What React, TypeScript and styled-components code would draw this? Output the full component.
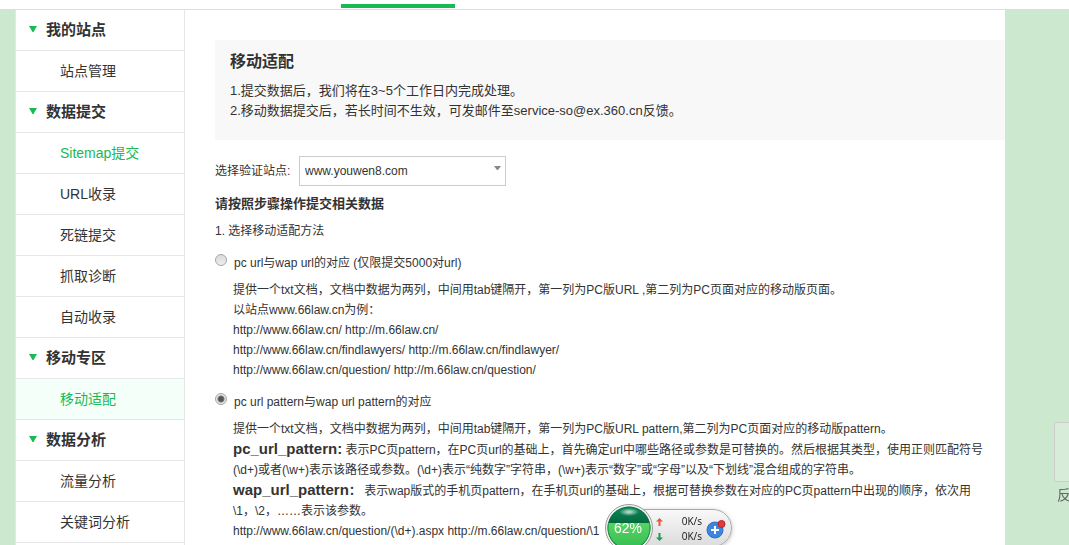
import React from 'react';
import styled, { createGlobalStyle } from 'styled-components';

const GlobalStyle = createGlobalStyle`
  * { box-sizing: border-box; }
  body {
    margin: 0;
    background: #cce8cf;
    color: #333;
    font: 12px/20px "Liberation Sans", "Noto Sans CJK SC", sans-serif;
  }
  h1, h2, p, ul, ol { margin: 0; padding: 0; }
  ul, ol { list-style: none; }
`;

const Page = styled.div`
  height: 100vh;
  overflow: hidden;
  display: flex;
  flex-direction: column;
`;

const TopBar = styled.header`
  flex: none;
  height: 10px;
  padding: 4px 0 0 341px;
  background: #fff;
  border-bottom: 1px solid #ddd;
`;

const ActiveTab = styled.div`
  width: 114px;
  height: 4px;
  background: #19b955;
`;

const Body = styled.div`
  flex: 1;
  min-height: 0;
  display: flex;
  margin: 0 64px 0 15px;
  background: #fff;
`;

const Sidebar = styled.nav`
  flex: none;
  width: 170px;
  border: solid #e6e6e6;
  border-width: 0 1px;
`;

const rowHeight = 41;

const Group = styled.h2`
  display: flex;
  align-items: center;
  gap: 8px;
  height: ${rowHeight}px;
  padding-left: 12px;
  border-bottom: 1px solid #e6e6e6;
  font-size: 15px;
  font-weight: bold;
`;

const Triangle = styled.svg`
  width: 10px;
  height: 8px;
`;

const NavLink = styled.a<{ $green?: boolean; $current?: boolean }>`
  display: flex;
  align-items: center;
  height: ${rowHeight}px;
  padding-left: 44px;
  border-bottom: 1px solid #e6e6e6;
  background: ${(p) => (p.$current ? '#f5fffa' : '#fff')};
  color: ${(p) => (p.$green || p.$current ? '#19b955' : '#333')};
  font-size: 14px;
  text-decoration: none;
`;

const Main = styled.main`
  flex: 1;
  min-width: 0;
  padding: 30px 0 0 30px;
  overflow: hidden;
  white-space: nowrap;
`;

const Intro = styled.section`
  padding: 11px 15px 19px;
  background: #f8f8f8;
  font-size: 13px;
`;

const Title = styled.h1`
  margin-bottom: 8px;
  font-size: 16px;
  line-height: 22px;
`;

const SiteField = styled.div`
  display: flex;
  align-items: center;
  gap: 8px;
  margin: 16px 0 8px;
`;

const SiteLabel = styled.label`
  width: 76px;
`;

const SelectBox = styled.div`
  position: relative;
  width: 207px;
`;

const Select = styled.select`
  display: block;
  width: 100%;
  height: 30px;
  padding: 0 24px 0 5px;
  border: 1px solid #ccc;
  border-radius: 0;
  background: #fff;
  color: #333;
  font: inherit;
  appearance: none;
`;

const SelectArrow = styled.svg`
  position: absolute;
  top: 10px;
  right: 5px;
  pointer-events: none;
`;

const StepsTitle = styled.h2`
  font-size: 13px;
  line-height: 20px;
`;

const Step = styled.p`
  margin: 7px 0 12px;
`;

const Method = styled.section`
  margin-bottom: 12px;
`;

const MethodLabel = styled.label`
  display: flex;
  align-items: flex-start;
  gap: 7px;
  margin-bottom: 7px;
`;

const Radio = styled.input`
  appearance: none;
  flex: none;
  width: 12px;
  height: 12px;
  margin: 1px 0 0;
  border: 1px solid #a5a5a5;
  border-radius: 50%;
  background: linear-gradient(#dadada, #eee);
  &:checked {
    background: radial-gradient(circle, #555 0 2px, #777 3px, #e6e6e6 4px);
  }
`;

const Description = styled.div`
  padding-left: 18px;
`;

const Term = styled.strong`
  font-size: 15px;
`;

const Feedback = styled.aside`
  position: fixed;
  top: 422px;
  right: -45px;
  width: 60px;
  color: #666;
  font-size: 14px;
`;

const FeedbackTile = styled.div`
  height: 60px;
  margin-bottom: 3px;
  border: 1px solid #ccc;
  border-radius: 3px;
  background: #d7ecd9;
`;

const FeedbackLink = styled.a`
  display: block;
  padding-left: 3px;
  color: inherit;
  text-decoration: none;
  white-space: nowrap;
`;

const Monitor = styled.aside`
  position: fixed;
  left: 605px;
  bottom: -7px;
  display: flex;
  align-items: center;
`;

const Pill = styled.div`
  display: flex;
  align-items: center;
  width: 103px;
  height: 38px;
  margin-left: -24px;
  padding: 2px 5px 0 26px;
  border: 1px solid #aaa;
  border-radius: 0 19px 19px 0;
  background: linear-gradient(#f8f8f8, #dcdcdc);
  box-shadow: 0 1px 4px rgba(0, 0, 0, 0.25);
`;

const Ball = styled.svg`
  position: relative;
  z-index: 1;
  flex: none;
`;

const Rates = styled.ul`
  flex: 1;
`;

const Rate = styled.li`
  display: flex;
  align-items: center;
  justify-content: space-between;
  height: 15px;
  color: #111;
  font: 10px/15px "Open Sans", sans-serif;
`;

const BoostButton = styled.button`
  display: block;
  height: 22px;
  margin-left: 4px;
  padding: 0;
  border: 0;
  background: none;
`;

type Item = { text: string; green?: boolean; current?: boolean };

const menu: { title: string; items: Item[] }[] = [
  { title: '我的站点', items: [{ text: '站点管理' }] },
  {
    title: '数据提交',
    items: [
      { text: 'Sitemap提交', green: true },
      { text: 'URL收录' },
      { text: '死链提交' },
      { text: '抓取诊断' },
      { text: '自动收录' },
    ],
  },
  { title: '移动专区', items: [{ text: '移动适配', current: true }] },
  { title: '数据分析', items: [{ text: '流量分析' }, { text: '关键词分析' }] },
];

function RateRow({ up, value }: { up?: boolean; value: string }) {
  return (
    <Rate>
      <svg width="7" height="8" viewBox="0 0 7 8" aria-hidden="true">
        <path
          d={up ? 'M3.5 0 7 3.5H4.5V8h-2V3.5H0z' : 'M3.5 8 7 4.5H4.5V0h-2v4.5H0z'}
          fill={up ? '#f0523a' : '#1f9c4f'}
        />
      </svg>
      <span>{value}</span>
    </Rate>
  );
}

function SpeedMonitor() {
  return (
    <Monitor>
      <Ball width="48" height="48" viewBox="0 0 48 48">
        <defs>
          <linearGradient id="deep" x1="0" y1="0" x2="0" y2="1">
            <stop offset="0" stopColor="#0b8a56" />
            <stop offset="0.4" stopColor="#04683f" />
          </linearGradient>
          <linearGradient id="liquid" x1="0" y1="0" x2="0" y2="1">
            <stop offset="0" stopColor="#57d463" />
            <stop offset="1" stopColor="#35bd50" />
          </linearGradient>
          <radialGradient id="shine">
            <stop offset="0" stopColor="#fff" stopOpacity="0.8" />
            <stop offset="1" stopColor="#fff" stopOpacity="0" />
          </radialGradient>
        </defs>
        <circle cx="24" cy="24" r="23.5" fill="#f4f4f4" stroke="#999" />
        <circle cx="24" cy="24" r="21.5" fill="url(#deep)" />
        <path d="M3 19h42a21.5 21.5 0 1 1-42 0z" fill="url(#liquid)" />
        <circle cx="24" cy="24" r="21" fill="none" stroke="#08703f" strokeOpacity="0.6" />
        <ellipse cx="24" cy="8" rx="10" ry="4" fill="url(#shine)" />
        <text x="23" y="29" textAnchor="middle" fill="#fff" fontSize="14" fontFamily="Liberation Sans">
          62%
        </text>
      </Ball>
      <Pill>
        <Rates>
          <RateRow up value="0K/s" />
          <RateRow value="0K/s" />
        </Rates>
        <BoostButton type="button" aria-label="加速">
          <svg width="20" height="22" viewBox="0 0 20 22">
            <circle cx="9" cy="12" r="8" fill="#3c86e0" stroke="#2f6fc4" />
            <path d="M9 8v8M5 12h8" stroke="#fff" strokeWidth="2" />
            <circle cx="15.5" cy="6" r="3.5" fill="#e23b3b" stroke="#b82222" />
          </svg>
        </BoostButton>
      </Pill>
    </Monitor>
  );
}

export default function App() {
  return (
    <>
      <GlobalStyle />
      <Page>
        <TopBar>
          <ActiveTab />
        </TopBar>
        <Body>
          <Sidebar>
            {menu.map((group) => (
              <React.Fragment key={group.title}>
                <Group>
                  <Triangle viewBox="0 0 10 8" aria-hidden="true">
                    <path d="M1 0h8L5.5 6h-1z" fill="#19b955" />
                  </Triangle>
                  {group.title}
                </Group>
                <ul>
                  {group.items.map((item) => (
                    <li key={item.text}>
                      <NavLink href="#" $green={item.green} $current={item.current}>
                        {item.text}
                      </NavLink>
                    </li>
                  ))}
                </ul>
              </React.Fragment>
            ))}
          </Sidebar>
          <Main>
            <Intro>
              <Title>移动适配</Title>
              <p>1.提交数据后，我们将在3~5个工作日内完成处理。</p>
              <p>2.移动数据提交后，若长时间不生效，可发邮件至service-so@ex.360.cn反馈。</p>
            </Intro>
            <SiteField>
              <SiteLabel htmlFor="site">选择验证站点:</SiteLabel>
              <SelectBox>
                <Select id="site">
                  <option>www.youwen8.com</option>
                </Select>
                <SelectArrow width="7" height="5" viewBox="0 0 7 5" aria-hidden="true">
                  <path d="M0 0h7L4 4H3z" fill="#888" />
                </SelectArrow>
              </SelectBox>
            </SiteField>
            <StepsTitle>请按照步骤操作提交相关数据</StepsTitle>
            <Step>1. 选择移动适配方法</Step>
            <Method>
              <MethodLabel>
                <Radio type="radio" name="method" />
                pc url与wap url的对应 (仅限提交5000对url)
              </MethodLabel>
              <Description>
                <p>提供一个txt文档，文档中数据为两列，中间用tab键隔开，第一列为PC版URL ,第二列为PC页面对应的移动版页面。</p>
                <p>以站点www.66law.cn为例：</p>
                <p>http://www.66law.cn/ http://m.66law.cn/</p>
                <p>http://www.66law.cn/findlawyers/ http://m.66law.cn/findlawyer/</p>
                <p>http://www.66law.cn/question/ http://m.66law.cn/question/</p>
              </Description>
            </Method>
            <Method>
              <MethodLabel>
                <Radio type="radio" name="method" defaultChecked />
                pc url pattern与wap url pattern的对应
              </MethodLabel>
              <Description>
                <p>提供一个txt文档，文档中数据为两列，中间用tab键隔开，第一列为PC版URL pattern,第二列为PC页面对应的移动版pattern。</p>
                <p>
                  <Term>pc_url_pattern:</Term> 表示PC页pattern，在PC页url的基础上，首先确定url中哪些路径或参数是可替换的。然后根据其类型，使用正则匹配符号
                  <br />
                  (\d+)或者(\w+)表示该路径或参数。(\d+)表示“纯数字”字符串，(\w+)表示“数字”或“字母”以及“下划线”混合组成的字符串。
                </p>
                <p>
                  <Term>wap_url_pattern</Term>
                  <b>：</b> 表示wap版式的手机页pattern，在手机页url的基础上，根据可替换参数在对应的PC页pattern中出现的顺序，依次用
                  <br />
                  \1，\2，……表示该参数。
                </p>
                <p>http://www.66law.cn/question/(\d+).aspx http://m.66law.cn/question/\1</p>
              </Description>
            </Method>
          </Main>
        </Body>
      </Page>
      <Feedback>
        <FeedbackTile />
        <FeedbackLink href="#">反馈</FeedbackLink>
      </Feedback>
      <SpeedMonitor />
    </>
  );
}
